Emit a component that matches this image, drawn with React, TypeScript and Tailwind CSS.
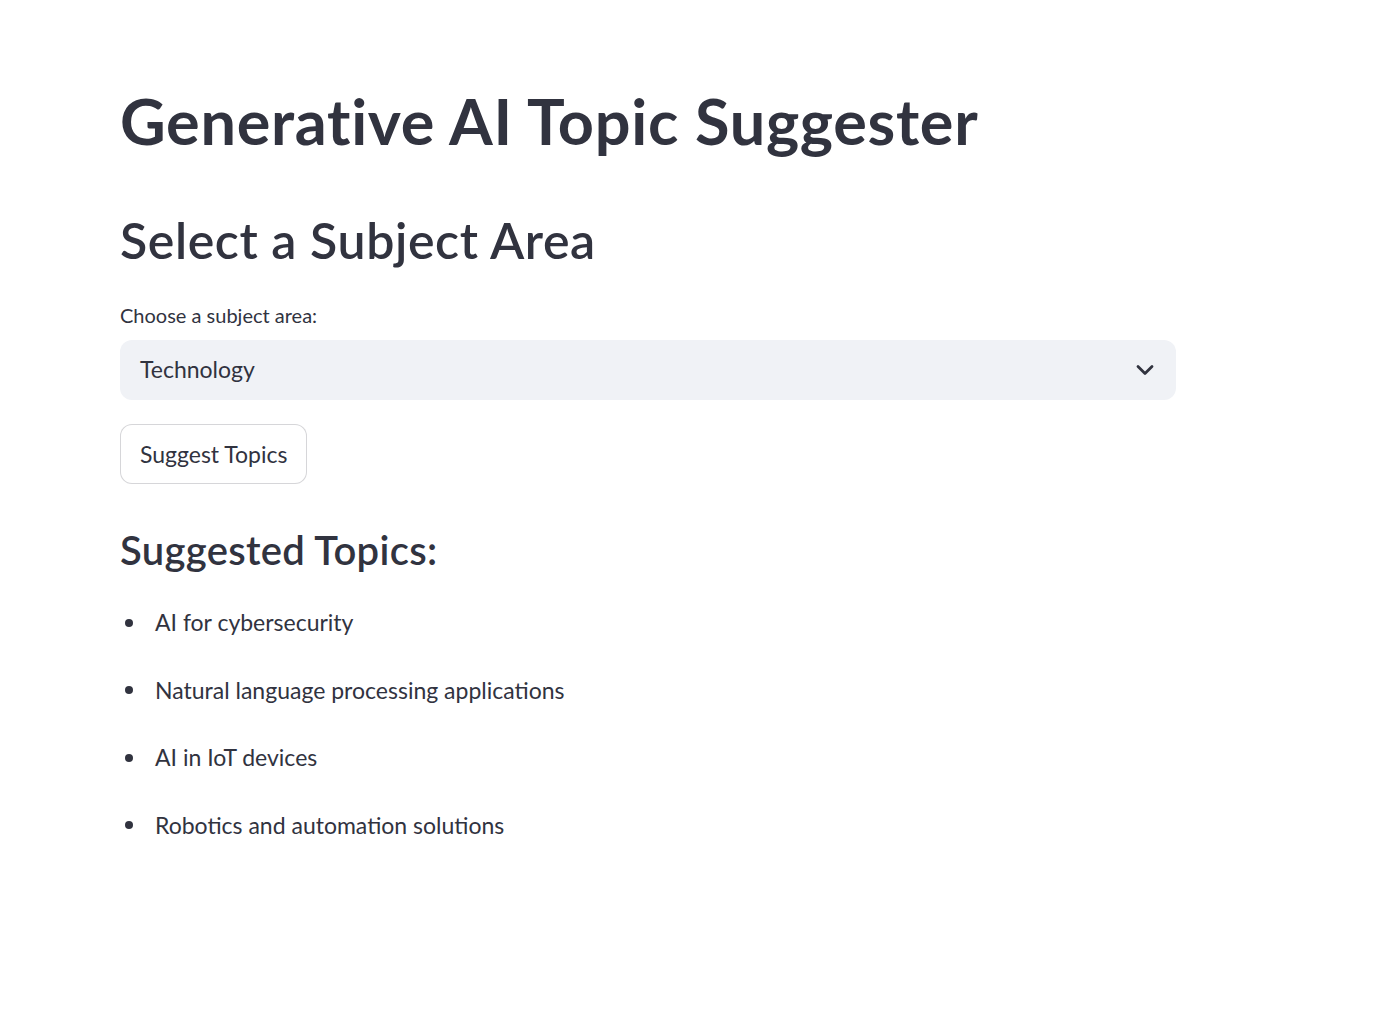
import React from 'react';

const topics = [
  'AI for cybersecurity',
  'Natural language processing applications',
  'AI in IoT devices',
  'Robotics and automation solutions',
];

const font = { fontFamily: 'Lato, "Noto Sans", sans-serif' };

export default function App() {
  return (
    <div className="min-h-screen w-full bg-white text-[#31333f]" style={font}>
      <div className="w-[1056px] ml-[120px] pt-[81px]">
        <h1 className="text-[63px] font-bold leading-[79px] h-[79px] tracking-[0.7px]">
          Generative AI Topic Suggester
        </h1>

        <h2 className="mt-[48px] text-[50px] font-semibold leading-[64px] h-[64px] tracking-[0.6px]">
          Select a Subject Area
        </h2>

        <label className="block mt-[28px] text-[20px] leading-[30px] h-[30px]">
          Choose a subject area:
        </label>

        <div className="mt-[10px] h-[60px] rounded-[12px] bg-[#f0f2f6] flex items-center justify-between pl-[20px] pr-[21px]">
          <span className="text-[23px] leading-[30px] -mt-[2px]">Technology</span>
          <svg width="20" height="12" viewBox="0 0 20 12" fill="none">
            <path d="M3 2.5l7 7 7-7" stroke="#31333f" strokeWidth="2.8" strokeLinecap="round" strokeLinejoin="round" />
          </svg>
        </div>

        <button className="mt-[24px] h-[60px] rounded-[12px] border border-[rgba(49,51,63,0.2)] bg-white px-[19px] text-[23px] text-[#31333f]">
          Suggest Topics
        </button>

        <h3 className="mt-[41px] text-[40px] font-semibold leading-[50px] h-[50px] tracking-[0.3px]">
          Suggested Topics:
        </h3>

        <ul className="mt-[14px]">
          {topics.map((t) => (
            <li key={t} className="h-[67.5px] flex items-center">
              <span className="ml-[5px] w-[8px] h-[8px] rounded-full bg-[#31333f]" />
              <span className="ml-[22px] text-[23px] leading-[30px] -mt-[1px]">{t}</span>
            </li>
          ))}
        </ul>
      </div>
    </div>
  );
}
